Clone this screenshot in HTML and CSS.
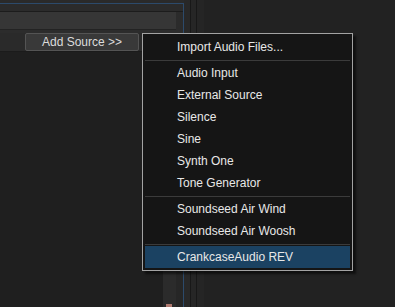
FILE: index.html
```html
<!DOCTYPE html>
<html lang="en">
<head>
    <meta charset="UTF-8">
    <title>Add Source</title>
    <link rel="stylesheet" href="styles.css">
</head>
<body>
    <div class="main">
        <div class="toolbar"></div>
        <div class="field"></div>
        <div class="field-foot"></div>
        <div class="button-row">
            <button class="add-source">Add Source &gt;&gt;</button>
        </div>
        <div class="list">
            <div class="list-body"></div>
            <div class="list-scroll">
                <span class="marker"></span>
            </div>
            <div class="list-gap"></div>
        </div>
    </div>
    <div class="divider"></div>
    <div class="side"></div>

    <!-- popup menu -->
    <div class="menu">
        <div class="item">Import Audio Files...</div>
        <div class="sep"></div>
        <div class="item">Audio Input</div>
        <div class="item">External Source</div>
        <div class="item">Silence</div>
        <div class="item">Sine</div>
        <div class="item">Synth One</div>
        <div class="item">Tone Generator</div>
        <div class="sep"></div>
        <div class="item">Soundseed Air Wind</div>
        <div class="item">Soundseed Air Woosh</div>
        <div class="sep"></div>
        <div class="item active">CrankcaseAudio REV</div>
    </div>
</body>
</html>
```

FILE: styles.css
```css
body {
    margin: 0;
    width: 395px;
    height: 307px;
    overflow: hidden;
    display: flex;
    background-color: #2a2a2a;
    font-family: "Liberation Sans", Arial, sans-serif;
    font-size: 12px;
}

.main {
    width: 183px;
    margin-top: 3px;
    display: flex;
    flex-direction: column;
    border-top: 1px solid #2c4a6b;
    border-right: 1px solid #2c4a6b;
    background-color: #2b2b2b;
}
.toolbar {
    height: 7px;
    border-bottom: 1px solid #1c1c1c;
}
.field {
    height: 17px;
    margin-right: 7px;
    background-color: #363636;
    border-bottom: 1px solid #232323;
}
.field-foot {
    height: 3px;
    background-color: #2c2c2c;
}
.button-row {
    height: 18px;
    padding-left: 25px;
    background-color: #2a2a2a;
}
.add-source {
    width: 114px;
    height: 18px;
    padding: 0;
    background-color: #393939;
    border: 1px solid #545454;
    border-radius: 2px;
    color: #dcdcdc;
    font-family: inherit;
    font-size: 12px;
}

.list {
    flex: 1;
    display: flex;
    border-top: 1px solid #1b1b1b;
}
.list-body {
    flex: 1;
    background-color: #1f1f1f;
}
.list-scroll {
    position: relative;
    width: 13px;
    background-color: #2b2b2b;
}
.list-scroll .marker {
    position: absolute;
    left: 3px;
    bottom: 0;
    width: 6px;
    height: 3px;
    background-color: #b07a70;
}
.list-gap {
    width: 7px;
    background-color: #262626;
}

.divider {
    width: 20px;
    background: linear-gradient(to right,
        #282828 0, #282828 6px,
        #181818 6px, #181818 7px,
        #262626 7px, #262626 12px,
        #181818 12px, #181818 13px,
        #252525 13px);
}
.side {
    flex: 1;
    background-color: #222222;
}

/* popup menu */
.menu {
    position: absolute;
    left: 142px;
    top: 33px;
    width: 205px;
    padding: 2px;
    background-color: #151515;
    border: 1px solid #a3a3a3;
    box-shadow: 3px 3px 2px rgba(0, 0, 0, 0.55);
}
.item {
    height: 22px;
    line-height: 22px;
    padding-left: 32px;
    color: #e8e8e8;
    white-space: nowrap;
}
.item.active {
    background-color: #1b4262;
}
.sep {
    height: 1px;
    margin: 2px 0 1px;
    background-color: #3b3b3b;
}
```
